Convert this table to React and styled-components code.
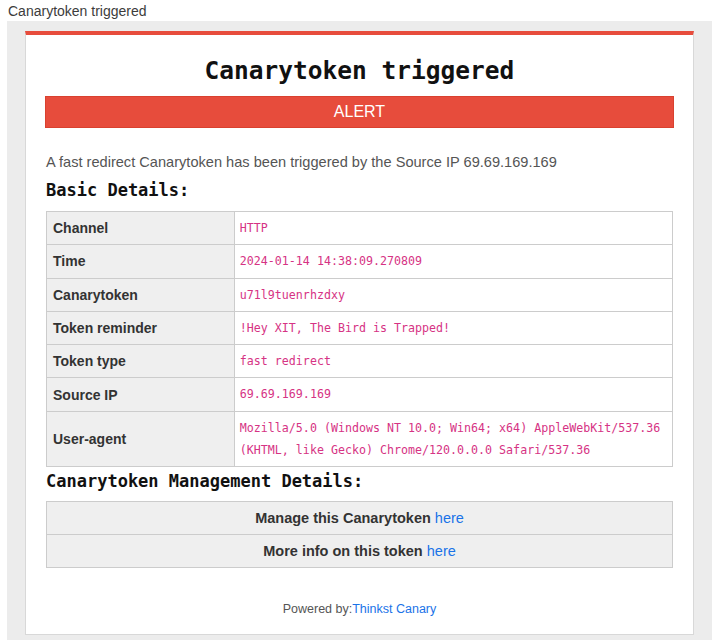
import React from "react";
import styled, { createGlobalStyle } from "styled-components";

const GlobalStyle = createGlobalStyle`
  body {
    margin: 0;
    font-family: "Liberation Sans", Arial, sans-serif;
    background: #fff;
  }
`;

const details = [
  { label: "Channel", value: "HTTP" },
  { label: "Time", value: "2024-01-14 14:38:09.270809" },
  { label: "Canarytoken", value: "u71l9tuenrhzdxy" },
  { label: "Token reminder", value: "!Hey XIT, The Bird is Trapped!" },
  { label: "Token type", value: "fast redirect" },
  { label: "Source IP", value: "69.69.169.169" },
  {
    label: "User-agent",
    value:
      "Mozilla/5.0 (Windows NT 10.0; Win64; x64) AppleWebKit/537.36 (KHTML, like Gecko) Chrome/120.0.0.0 Safari/537.36",
  },
];

const App = () => {
  return (
    <Page>
      <GlobalStyle />
      <PageTitle>Canarytoken triggered</PageTitle>
      <Backdrop>
        <Card>
          <Title>Canarytoken triggered</Title>
          <AlertBar>ALERT</AlertBar>
          <Intro>
            A fast redirect Canarytoken has been triggered by the Source IP
            69.69.169.169
          </Intro>
          <SectionHeading>Basic Details:</SectionHeading>
          <DetailsTable>
            <tbody>
              {details.map((row) => (
                <tr key={row.label}>
                  <LabelCell>{row.label}</LabelCell>
                  <ValueCell>{row.value}</ValueCell>
                </tr>
              ))}
            </tbody>
          </DetailsTable>
          <SectionHeading $tight>Canarytoken Management Details:</SectionHeading>
          <DetailsTable>
            <tbody>
              <tr>
                <LinkCell>
                  Manage this Canarytoken <Link href="#">here</Link>
                </LinkCell>
              </tr>
              <tr>
                <LinkCell>
                  More info on this token <Link href="#">here</Link>
                </LinkCell>
              </tr>
            </tbody>
          </DetailsTable>
          <Footer>
            Powered by:<Link href="#">Thinkst Canary</Link>
          </Footer>
        </Card>
      </Backdrop>
    </Page>
  );
};

const Page = styled.div`
  padding: 2px 8px 0 7px;
`;

const PageTitle = styled.div`
  font-size: 14px;
  line-height: 19px;
  color: #3c3c3c;
  padding-left: 1px;
`;

const Backdrop = styled.div`
  background: #ececec;
  padding: 10px 18px 8px 18px;
`;

const Card = styled.div`
  background: #fff;
  border: 1px solid #d8d8d8;
  border-top: 4px solid #e74c3c;
  padding: 21px 20px 16px 20px;
`;

const Title = styled.h1`
  margin: 0;
  text-align: center;
  font-family: "DejaVu Sans Mono", monospace;
  font-size: 24.5px;
  line-height: 30px;
  font-weight: bold;
  color: #111;
`;

const AlertBar = styled.div`
  margin: 10px -1px 0 -1px;
  height: 32px;
  box-sizing: border-box;
  background: #e74c3c;
  border: 1px solid #d9412f;
  color: #fff;
  font-size: 16px;
  line-height: 30px;
  text-align: center;
`;

const Intro = styled.p`
  margin: 24px 0 0 0;
  font-size: 14.6px;
  line-height: 20px;
  color: #555;
`;

const SectionHeading = styled.h3`
  margin: ${(props) => (props.$tight ? "4px 0 10px 0" : "8px 0 11px 0")};
  font-family: "DejaVu Sans Mono", monospace;
  font-size: 17px;
  line-height: 20px;
  font-weight: bold;
  color: #111;
`;

const DetailsTable = styled.table`
  width: 100%;
  border-collapse: collapse;
  border: 1px solid #cccccc;
`;

const LabelCell = styled.td`
  width: 30%;
  background: #efefef;
  border: 1px solid #cccccc;
  padding: 5px 6px;
  font-size: 14px;
  line-height: 22px;
  font-weight: bold;
  color: #333;
`;

const ValueCell = styled.td`
  border: 1px solid #cccccc;
  padding: 5px 5px;
  font-family: "DejaVu Sans Mono", monospace;
  font-size: 11.65px;
  line-height: 22.3px;
  color: #d63384;
`;

const LinkCell = styled.td`
  background: #efefef;
  border: 1px solid #cccccc;
  padding: 5px 6px;
  text-align: center;
  font-size: 14.5px;
  line-height: 22px;
  font-weight: bold;
  color: #333;
`;

const Link = styled.a`
  color: #1a73e8;
  font-weight: normal;
  text-decoration: none;
`;

const Footer = styled.div`
  margin-top: 33px;
  text-align: center;
  font-size: 12.5px;
  line-height: 17px;
  color: #555;
`;

export default App;
